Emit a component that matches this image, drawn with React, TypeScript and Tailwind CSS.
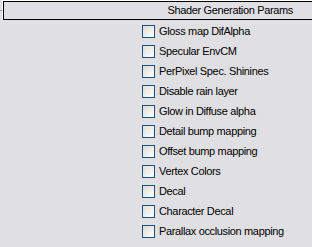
const options = [
  "Gloss map DifAlpha",
  "Specular EnvCM",
  "PerPixel Spec. Shinines",
  "Disable rain layer",
  "Glow in Diffuse alpha",
  "Detail bump mapping",
  "Offset bump mapping",
  "Vertex Colors",
  "Decal",
  "Character Decal",
  "Parallax occlusion mapping",
];

const CheckBox = () => (
  <span className="block w-[13px] h-[13px] shrink-0 border border-[#1c5180] bg-gradient-to-br from-[#dcdcd7] to-white" />
);

export default function App() {
  return (
    <div
      className="w-[312px] h-[247px] overflow-hidden bg-[#e0dfe3] text-black text-[11px] leading-none tracking-[-0.35px]"
      style={{ fontFamily: "Tahoma, 'Liberation Sans', Arial, sans-serif" }}
    >
      {/* header */}
      <div className="relative">
        <div className="ml-[2px] border-t border-l border-white">
          <div className="h-[19px] border border-black border-r-0 flex items-center justify-end pr-[19px]">
            Shader Generation Params
          </div>
        </div>
        <span className="absolute left-0 top-[10px] w-[2px] h-px bg-[#a0a0a0]" />
      </div>

      {/* options */}
      <div className="flex flex-col pl-[142px] pt-[1px]">
        {options.map((label) => (
          <label key={label} className="h-[20px] flex items-center gap-[4px]">
            <CheckBox />
            <span className="whitespace-nowrap">{label}</span>
          </label>
        ))}
      </div>
    </div>
  );
}
